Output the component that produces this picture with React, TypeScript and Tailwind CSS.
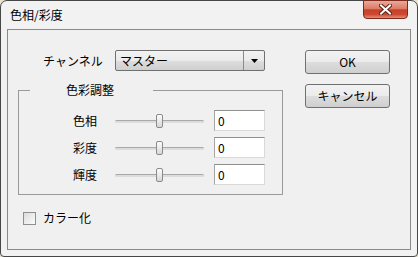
import { useState } from 'react'

const FONT = "font-['Noto_Sans_CJK_JP','Noto_Sans',sans-serif]"

const ROWS = ['色相', '彩度', '輝度']

function Slider() {
  return (
    <div className="relative w-[89px] h-[14px] flex items-center justify-center">
      <div className="absolute inset-x-0 top-[6px] h-[3px] rounded-full border-t border-[#a8a8a8] bg-[#dcdcdc]" />
      <div className="relative w-[7px] h-[14px] rounded-[2px] border border-[#8a8a8a] bg-gradient-to-b from-[#fdfdfd] to-[#d6d6d6]" />
    </div>
  )
}

function Win7Button({ label }: { label: string }) {
  return (
    <button className="w-[85px] h-[24px] rounded-[3px] border border-[#707070] bg-[linear-gradient(#f2f2f2_0%,#ebebeb_50%,#dddddd_51%,#cfcfcf_100%)] text-[12px] text-black leading-none">
      {label}
    </button>
  )
}

export default function App() {
  const [values] = useState(['0', '0', '0'])
  const [colorize, setColorize] = useState(false)

  return (
    <div className={`w-[418px] h-[257px] bg-[#e9e2cf] ${FONT}`}>
      <div className="w-[418px] h-[257px] rounded-t-[7px] rounded-b-[4px] border border-[#474747] bg-[#f2f2f2] flex flex-col text-black">
        {/* Title bar */}
        <div className="h-[28px] flex items-start justify-between">
          <span className="pl-[9px] pt-[6px] text-[12px] leading-[16px]">色相/彩度</span>
          <div className="mr-[9px] -mt-px w-[45px] h-[19px] rounded-b-[4px] border border-[#7a2a1e] bg-[linear-gradient(#eaa898_0%,#dd7c66_45%,#c8402a_52%,#cc4731_78%,#e38d72_100%)] flex items-center justify-center">
            <svg width="13" height="11" viewBox="0 0 13 11">
              <path d="M2 1.5 L11 9.5 M11 1.5 L2 9.5" stroke="#5a2118" strokeWidth="4" strokeLinecap="square" />
              <path d="M2 1.5 L11 9.5 M11 1.5 L2 9.5" stroke="#ffffff" strokeWidth="2" strokeLinecap="square" />
            </svg>
          </div>
        </div>

        {/* Client area */}
        <div className="mx-[6px] mb-[6px] flex-1 border border-[#8a8a8a] bg-[#f0f0f0] flex text-[12px]">
          <div className="pl-[10px] pt-[20px] flex flex-col">
            {/* Channel */}
            <div className="flex items-center h-[21px]">
              <span className="w-[97px] pl-[25px]">チャンネル</span>
              <div className="w-[150px] h-[21px] rounded-[2px] border border-[#707070] bg-[linear-gradient(#f2f2f2_0%,#ebebeb_50%,#dddddd_51%,#cfcfcf_100%)] flex items-stretch">
                <span className="flex-1 pl-[4px] leading-[19px]">マスター</span>
                <div className="w-[21px] border-l border-[#8a8a8a] flex items-center justify-center">
                  <svg width="7" height="4" viewBox="0 0 7 4">
                    <path d="M0 0 H7 L3.5 4 Z" fill="#000" />
                  </svg>
                </div>
              </div>
            </div>

            {/* Group box */}
            <fieldset className="mt-[12px] w-[265px] border border-[#9a9a9a] pb-[9px]">
              <legend className="ml-[11px] w-[123px] pl-[36px] leading-[14px]">色彩調整</legend>
              <div className="pt-[13px] flex flex-col gap-[6px]">
                {ROWS.map((label, i) => (
                  <div key={label} className="flex items-center h-[21px]">
                    <span className="w-[96px] pr-[18px] text-right">{label}</span>
                    <Slider />
                    <input
                      readOnly
                      value={values[i]}
                      className="ml-[10px] w-[51px] h-[21px] border border-t-[#8e8f8f] border-l-[#a5a5a5] border-r-[#d9d9d9] border-b-[#d9d9d9] bg-white px-[3px] text-[12px] outline-none"
                    />
                  </div>
                ))}
              </div>
            </fieldset>

            {/* Colorize */}
            <div className="mt-[14px] ml-[5px] flex items-center gap-[7px]">
              <button
                onClick={() => setColorize(v => !v)}
                className="w-[13px] h-[13px] border border-[#8e8f8f] bg-gradient-to-br from-[#dcdcdc] to-[#fbfbfb]"
              />
              <span>カラー化</span>
            </div>
          </div>

          {/* Buttons */}
          <div className="ml-[22px] pt-[20px] flex flex-col gap-[10px]">
            <Win7Button label="OK" />
            <Win7Button label="キャンセル" />
          </div>
          {colorize && null}
        </div>
      </div>
    </div>
  )
}
